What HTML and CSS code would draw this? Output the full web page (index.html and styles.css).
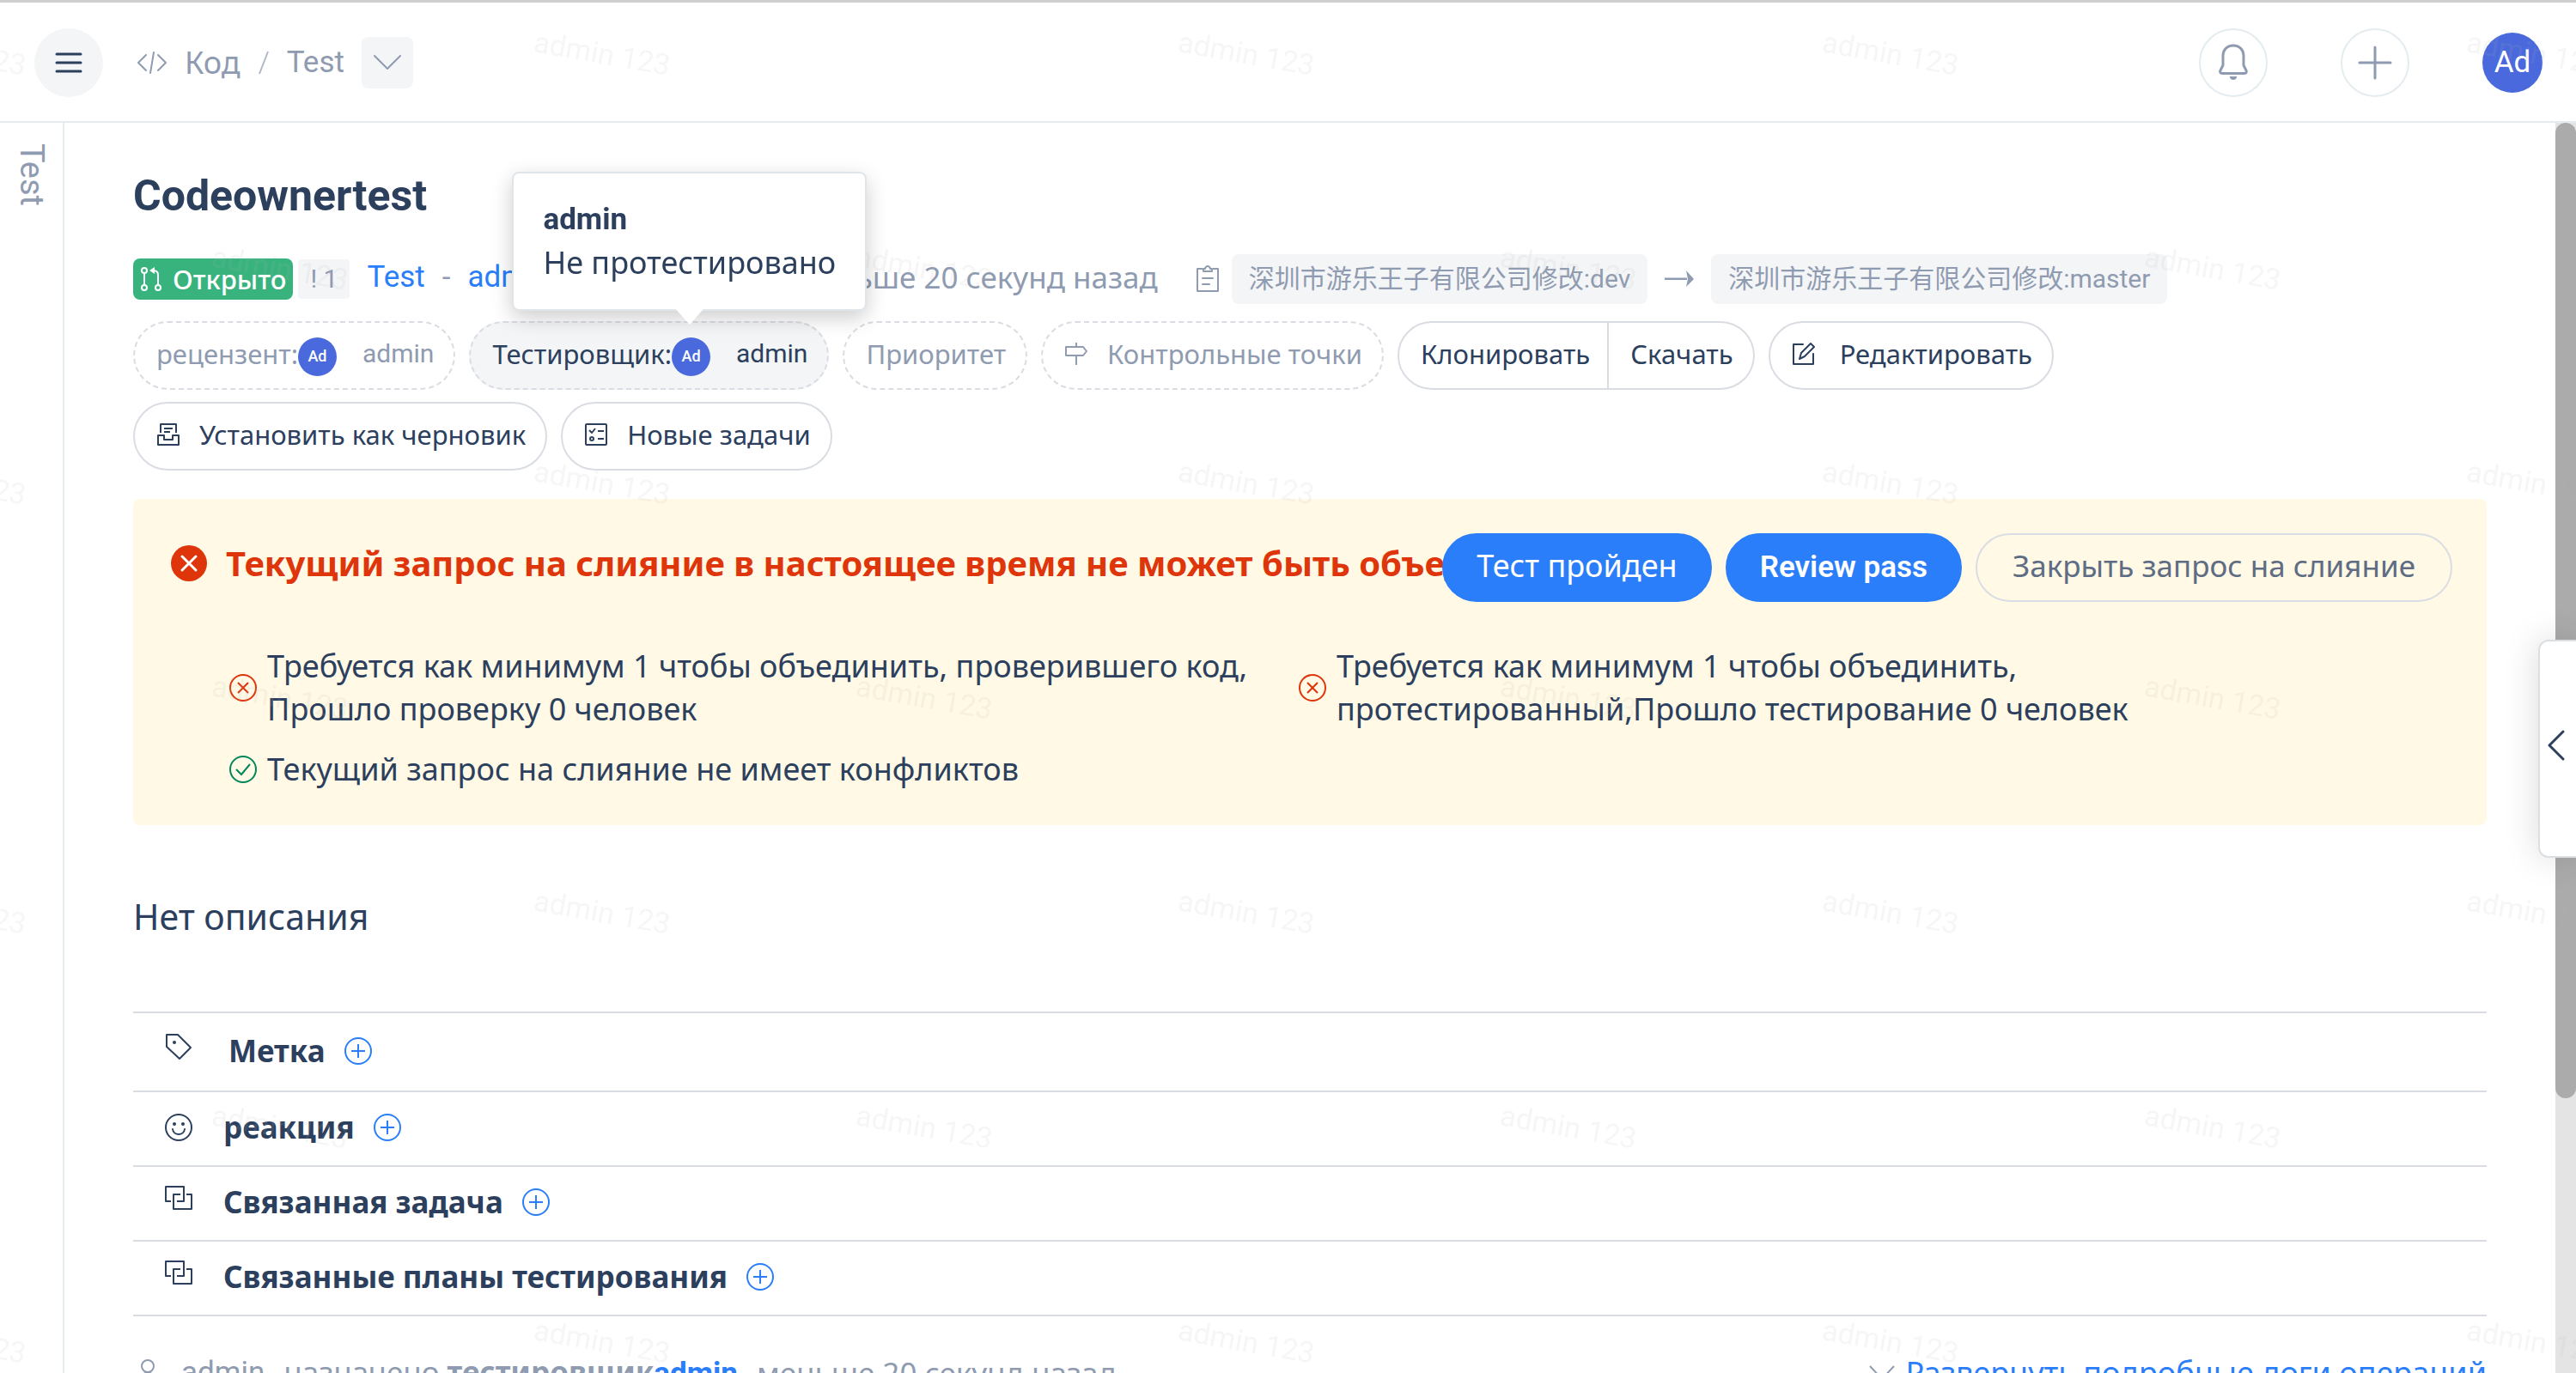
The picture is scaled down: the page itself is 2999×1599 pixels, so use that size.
FILE: index.html
```html
<!DOCTYPE html>
<html lang="ru">
<head>
<meta charset="utf-8">
<meta name="viewport" content="width=device-width, initial-scale=1">
<title>Codeownertest</title>
<link rel="stylesheet" href="styles.css">
</head>
<body>
<header class="topbar">
  <button class="round menu" type="button" aria-label="Меню">
    <svg width="32" height="32" viewBox="0 0 32 32" fill="none" stroke="currentColor" stroke-width="3" stroke-linecap="round"><path d="M2 6h28M2 16h28M2 26h28"/></svg>
  </button>
  <nav class="crumbs">
    <svg width="36" height="28" viewBox="0 0 36 28" fill="none" stroke="currentColor" stroke-width="2" stroke-linecap="round" stroke-linejoin="round"><path d="M11 5 2 14l9 9M25 5l9 9-9 9M20 2l-4 24"/></svg>
    <a href="#">Код</a>
    <svg class="slash" width="14" height="28" viewBox="0 0 14 28" fill="none" stroke="currentColor" stroke-width="2"><path d="M12 1 2 27"/></svg>
    <a href="#" class="latin">Test</a>
    <button class="drop" type="button" aria-label="Выбрать репозиторий">
      <svg width="34" height="20" viewBox="0 0 34 20" fill="none" stroke="currentColor" stroke-width="2" stroke-linecap="round" stroke-linejoin="round"><path d="M2 2l15 15L32 2"/></svg>
    </button>
  </nav>
  <div class="tools">
    <button class="round outlined" type="button" aria-label="Уведомления">
      <svg width="36" height="46" viewBox="0 0 36 46" fill="none" stroke="currentColor" stroke-width="3" stroke-linejoin="round"><path d="M18 3C10.500 3 6 8.500 6 15v11l-3 6c-1 2 0 3.500 2 3.500h26c2 0 3-1.500 2-3.500l-3-6V15C30 8.500 25.500 3 18 3z"/><path d="M14 39h8a4 4 0 0 1-8 0z" fill="currentColor" stroke="none"/></svg>
    </button>
    <button class="round outlined" type="button" aria-label="Создать">
      <svg width="40" height="40" viewBox="0 0 40 40" fill="none" stroke="currentColor" stroke-width="3" stroke-linecap="round"><path d="M20 2v36M2 20h36"/></svg>
    </button>
    <a class="avatar big" href="#">Ad</a>
  </div>
</header>

<div class="shell">
  <aside class="rail">Test</aside>
  <main class="content">
    <h1 class="title">Codeownertest</h1>

    <div class="meta">
      <span class="state">
        <svg width="26" height="30" viewBox="0 0 26 30" fill="none" stroke="currentColor" stroke-width="2"><circle cx="5" cy="5" r="3"/><circle cx="5" cy="25" r="3"/><circle cx="21" cy="25" r="3"/><path d="M5 8v14M21 22V10c0-4-2-5-6-5"/><path d="M17 1v8l-6-4z" fill="currentColor" stroke="none"/></svg>
        Открыто
      </span>
      <span class="number">! 1</span>
      <a class="link latin" href="#">Test</a>
      <span class="dash latin">-</span>
      <a class="link latin" href="#">admin</a>
      <span class="when">создал запрос меньше 20 секунд назад</span>
      <svg class="clip" width="28" height="34" viewBox="0 0 28 34" fill="none" stroke="currentColor" stroke-width="2" stroke-linejoin="round"><path d="M8 5H2v26h24V5h-6"/><path d="M9 8V5h2c1-4 5-4 6 0h2v3H9z"/><path d="M8 16h12M8 23h8" stroke-linecap="round"/></svg>
      <span class="branch">深圳市游乐王子有限公司修改:dev</span>
      <svg class="arrow" width="34" height="22" viewBox="0 0 34 22"><path d="M0 9.500h26V12H0z" fill="currentColor"/><path d="M25 1l9 10-9 9 2-9z" fill="currentColor"/></svg>
      <span class="branch">深圳市游乐王子有限公司修改:master</span>
    </div>

    <div class="actions">
      <button class="pill dashed" type="button">рецензент:<span class="avatar small">Ad</span><span class="who">admin</span></button>
      <span class="anchor">
        <button class="pill dashed active" type="button">Тестировщик:<span class="avatar small">Ad</span><span class="who">admin</span></button>
        <span class="tooltip" role="tooltip"><b class="latin">admin</b><span>Не протестировано</span></span>
      </span>
      <button class="pill dashed" type="button">Приоритет</button>
      <button class="pill dashed icon" type="button">
        <svg width="28" height="28" viewBox="0 0 28 28" fill="none" stroke="currentColor" stroke-width="2" stroke-linejoin="round"><path d="M14 1v5M14 16v11M2 6h20l4 5-4 5H2z"/></svg>
        Контрольные точки
      </button>
      <span class="group">
        <button class="pill" type="button">Клонировать</button>
        <button class="pill" type="button">Скачать</button>
      </span>
      <button class="pill icon edit" type="button">
        <svg width="28" height="28" viewBox="0 0 28 28" fill="none" stroke="currentColor" stroke-width="2" stroke-linejoin="round" stroke-linecap="round"><path d="M13 3H2v23h23V14"/><path d="M9 20l2-7L22 2l4 4-11 11z"/></svg>
        Редактировать
      </button>
      <button class="pill icon" type="button">
        <svg width="28" height="28" viewBox="0 0 28 28" fill="none" stroke="currentColor" stroke-width="2" stroke-linejoin="round"><path d="M5 12V2h18v10M9 7h10M9 11h7"/><path d="M2 15h7v5h10v-5h7v11H2z"/></svg>
        Установить как черновик
      </button>
      <button class="pill icon" type="button">
        <svg width="28" height="28" viewBox="0 0 28 28" fill="none" stroke="currentColor" stroke-width="2" stroke-linejoin="round"><rect x="2" y="2" width="24" height="24" rx="1"/><path d="M6 9l3 3 4-5M16 10h7M16 19h7"/><circle cx="9" cy="19" r="2"/></svg>
        Новые задачи
      </button>
    </div>

    <section class="alert">
      <div class="alert-head">
        <svg class="fail" width="42" height="42" viewBox="0 0 42 42"><circle cx="21" cy="21" r="21" fill="currentColor"/><path d="M13 13l16 16M29 13L13 29" stroke="#fff" stroke-width="3" stroke-linecap="round"/></svg>
        <h2 class="alert-title">Текущий запрос на слияние в настоящее время не может быть объединён</h2>
        <div class="alert-actions">
          <button class="solid" type="button">Тест пройден</button>
          <button class="solid strong" type="button">Review pass</button>
          <button class="hollow" type="button">Закрыть запрос на слияние</button>
        </div>
      </div>
      <ul class="checks">
        <li>
          <svg class="no" width="32" height="32" viewBox="0 0 32 32" fill="none" stroke="currentColor" stroke-width="2"><circle cx="16" cy="16" r="15"/><path d="M10 10l12 12M22 10L10 22"/></svg>
          <span>Требуется как минимум 1 чтобы объединить, проверившего код, Прошло проверку 0 человек</span>
        </li>
        <li>
          <svg class="no" width="32" height="32" viewBox="0 0 32 32" fill="none" stroke="currentColor" stroke-width="2"><circle cx="16" cy="16" r="15"/><path d="M10 10l12 12M22 10L10 22"/></svg>
          <span>Требуется как минимум 1 чтобы объединить,<br>протестированный,Прошло тестирование 0 человек</span>
        </li>
        <li>
          <svg class="yes" width="32" height="32" viewBox="0 0 32 32" fill="none" stroke="currentColor" stroke-width="2"><circle cx="16" cy="16" r="15"/><path d="M8 16l6 6 10-12"/></svg>
          <span>Текущий запрос на слияние не имеет конфликтов</span>
        </li>
      </ul>
    </section>

    <p class="description">Нет описания</p>

    <div class="fields">
      <div class="field tag">
        <svg class="lead" width="32" height="32" viewBox="0 0 32 32" fill="none" stroke="currentColor" stroke-width="2" stroke-linejoin="round"><path d="M2 2h13l15 15-13 13L2 16z"/><circle cx="11" cy="11" r="2" fill="currentColor" stroke="none"/></svg>
        <b>Метка</b>
        <button class="add" type="button" aria-label="Добавить метку"><svg width="32" height="32" viewBox="0 0 32 32" fill="none" stroke="currentColor" stroke-width="2"><circle cx="16" cy="16" r="15"/><path d="M16 8v16M8 16h16"/></svg></button>
      </div>
      <div class="field face">
        <svg class="lead" width="32" height="32" viewBox="0 0 32 32" fill="none" stroke="currentColor" stroke-width="2" stroke-linecap="round"><circle cx="16" cy="16" r="15"/><path d="M9 18c1 8 13 8 14 0"/><circle cx="11" cy="12" r="2" fill="currentColor" stroke="none"/><circle cx="21" cy="12" r="2" fill="currentColor" stroke="none"/></svg>
        <b>реакция</b>
        <button class="add" type="button" aria-label="Добавить реакцию"><svg width="32" height="32" viewBox="0 0 32 32" fill="none" stroke="currentColor" stroke-width="2"><circle cx="16" cy="16" r="15"/><path d="M16 8v16M8 16h16"/></svg></button>
      </div>
      <div class="field">
        <svg class="lead" width="32" height="28" viewBox="0 0 32 28" fill="none" stroke="currentColor" stroke-width="2" stroke-linejoin="round"><path d="M7 18H1V1h21v17h-8"/><path d="M18 10h-8v17h21V10h-6"/></svg>
        <b>Связанная задача</b>
        <button class="add" type="button" aria-label="Добавить задачу"><svg width="32" height="32" viewBox="0 0 32 32" fill="none" stroke="currentColor" stroke-width="2"><circle cx="16" cy="16" r="15"/><path d="M16 8v16M8 16h16"/></svg></button>
      </div>
      <div class="field">
        <svg class="lead" width="32" height="28" viewBox="0 0 32 28" fill="none" stroke="currentColor" stroke-width="2" stroke-linejoin="round"><path d="M7 18H1V1h21v17h-8"/><path d="M18 10h-8v17h21V10h-6"/></svg>
        <b>Связанные планы тестирования</b>
        <button class="add" type="button" aria-label="Добавить план"><svg width="32" height="32" viewBox="0 0 32 32" fill="none" stroke="currentColor" stroke-width="2"><circle cx="16" cy="16" r="15"/><path d="M16 8v16M8 16h16"/></svg></button>
      </div>
    </div>

    <div class="log">
      <svg width="34" height="34" viewBox="0 0 34 34" fill="none" stroke="currentColor" stroke-width="2"><circle cx="17" cy="9" r="7"/><path d="M6 33c0-22 22-22 22 0z"/></svg>
      <span class="latin">admin</span>
      <span>назначено <b>тестировщик</b><a class="link latin" href="#"><b>admin</b></a></span>
      <span>меньше 20 секунд назад</span>
      <a class="link expand" href="#"><svg width="32" height="20" viewBox="0 0 32 20" fill="none" stroke="currentColor" stroke-width="2"><path d="M2 2l14 15L30 2"/></svg>Развернуть подробные логи операций</a>
    </div>
  </main>
  <div class="scroll"><div class="thumb"></div></div>
  <button class="drawer" type="button" aria-label="Открыть панель">
    <svg width="22" height="36" viewBox="0 0 22 36" fill="none" stroke="currentColor" stroke-width="3" stroke-linecap="round" stroke-linejoin="round"><path d="M19 2 3 18l16 16"/></svg>
  </button>
</div>

<svg class="watermark" aria-hidden="true">
  <defs>
    <pattern id="mark" width="750" height="500" patternUnits="userSpaceOnUse">
      <text transform="translate(620 60) rotate(10)">admin 123</text>
      <text transform="translate(-130 60) rotate(10)">admin 123</text>
      <text transform="translate(245 310) rotate(10)">admin 123</text>
    </pattern>
  </defs>
  <rect width="100%" height="100%" fill="url(#mark)"/>
</svg>
</body>
</html>
```
FILE: styles.css
```css
* { box-sizing: border-box; }

body {
  margin: 0;
  height: 100vh;
  overflow: hidden;
  display: flex;
  flex-direction: column;
  border-top: 3px solid #cdcfce;
  background: #fff;
  color: #2c405e;
  font: 36px/50px "Noto Sans", sans-serif;
}

button { font: inherit; color: inherit; margin: 0; padding: 0; border: 0; background: none; cursor: pointer; }
a { color: inherit; text-decoration: none; }
svg { flex: none; display: block; }
.latin { font-family: Roboto, sans-serif; font-size: 35px; }
.link { color: #2b7ef9; }

/* Top bar */
.topbar {
  flex: none;
  display: flex;
  align-items: center;
  height: 140px;
  padding: 2px 39px 0 40px;
  border-bottom: 2px solid #e4ecf0;
}
.round { display: flex; align-items: center; justify-content: center; width: 80px; height: 80px; border-radius: 50%; }
.menu { background: #f4f5f7; }
.outlined { border: 2px solid #e4ecf0; color: #8f9bb0; }
.crumbs { display: flex; align-items: center; gap: 20px; margin-left: 39px; color: #8f9bb0; }
.slash { opacity: .7; }
.drop { display: flex; align-items: center; justify-content: center; width: 60px; height: 60px; border-radius: 8px; background: #f4f5f7; }
.tools { display: flex; align-items: center; gap: 85px; margin-left: auto; }
.avatar { display: flex; align-items: center; justify-content: center; flex: none; border-radius: 50%; background: #4969dc; color: #fff; font-family: Roboto, sans-serif; }
.big { width: 70px; height: 70px; font-size: 35px; }
.small { width: 45px; height: 45px; margin-top: 6px; font-size: 18px; font-weight: 500; }

/* Shell */
.shell { position: relative; flex: 1; min-height: 0; display: flex; }
.rail {
  flex: none;
  width: 75px;
  padding-top: 24px;
  border-right: 2px solid #e4ecf0;
  color: #8f9bb0;
  font: 38px/73px Roboto, sans-serif;
  writing-mode: vertical-rl;
}
.content { flex: 1; min-width: 0; padding: 55px 80px 0; overflow: hidden; }
.scroll { flex: none; width: 24px; background: #e4e4e4; }
.thumb { height: 78%; border-radius: 12px; background: #ababab; }
.drawer {
  position: absolute;
  right: 0;
  top: 602px;
  width: 44px;
  height: 254px;
  padding: 0 0 8px 8px;
  border: 2px solid #dcdfe2;
  border-right: 0;
  border-radius: 12px 0 0 12px;
  background: #fff;
  box-shadow: 0 0 40px rgba(0, 0, 0, .15);
}

.title { margin: 0 0 38px; font: 700 50px/60px Roboto, sans-serif; }

.meta { display: flex; align-items: center; color: #8f9bb0; font-size: 35px; white-space: nowrap; }
.meta .latin, .when { padding-bottom: 4px; }
.state { display: flex; align-items: center; gap: 12px; height: 48px; padding: 0 8px; border-radius: 8px; background: #38b37e; color: #fff; font-size: 31px; font-weight: 500; }
.number { height: 46px; margin: 0 20px 0 6px; padding: 0 14px; border-radius: 4px; background: #f4f5f7; font: 30px/46px Roboto, sans-serif; }
.dash { margin: 0 20px; }
.when { margin-left: 36px; }
.clip { margin: 0 14px 0 44px; }
.branch { height: 58px; padding: 0 20px; border-radius: 8px; background: #f4f5f7; font: 30px/58px Roboto, "Noto Sans CJK SC", sans-serif; }
.arrow { margin: 0 20px; }

.actions { display: flex; flex-wrap: wrap; gap: 14px 16px; margin: 20px 0 33px; padding-right: 40px; }
.pill {
  display: flex;
  align-items: center;
  height: 80px;
  padding: 0 23px 4px 25px;
  border: 2px solid #d9dde3;
  border-radius: 40px;
  font-size: 31px;
  white-space: nowrap;
}
.dashed { border-style: dashed; color: #8f9bb0; }
.active { background: #f4f5f7; color: #2c405e; }
.who { margin-left: 30px; font: 30px/50px Roboto, sans-serif; }
.icon { gap: 22px; }
.edit { gap: 28px; }
.group { display: flex; }
.group .pill:first-child { border-radius: 40px 0 0 40px; padding-right: 20px; }
.group .pill:last-child { border-radius: 0 40px 40px 0; border-left: 0; }

.anchor { position: relative; display: flex; }
.tooltip {
  position: absolute;
  z-index: 5;
  bottom: 92px;
  left: 50px;
  display: flex;
  flex-direction: column;
  padding: 29px 34px;
  border: 2px solid #e0e5ea;
  border-radius: 8px;
  background: #fff;
  box-shadow: 0 8px 24px rgba(0, 0, 0, .2);
  font-size: 36px;
  white-space: nowrap;
}
.tooltip::after {
  content: "";
  position: absolute;
  left: 50%;
  bottom: -18px;
  width: 34px;
  height: 19px;
  margin-left: -17px;
  background: #fff;
  clip-path: polygon(0 0, 100% 0, 50% 100%);
}

/* Merge status */
.alert { padding: 40px 40px 40px 44px; border-radius: 8px; background: #fff9e5; }
.alert-head { display: flex; align-items: center; }
.fail { color: #de350b; margin-bottom: 10px; }
.alert-title { flex: 1; min-width: 0; margin: 0 -20px 10px 22px; overflow: hidden; color: #de350b; font: 700 40px/60px "Noto Sans", sans-serif; white-space: nowrap; }
.alert-actions { position: relative; display: flex; gap: 16px; }
.solid, .hollow { height: 80px; padding: 0 38px 4px; border: 2px solid #2b7ef9; border-radius: 40px; }
.solid { background: #2b7ef9; color: #fff; }
.strong { padding-bottom: 0; font: 600 35px/50px Roboto, sans-serif; }
.hollow { padding: 0 41px 4px; border-color: #dadde3; color: #5e6c84; font-size: 35px; }
.checks { display: grid; grid-template-columns: 1fr 1fr; gap: 20px 40px; margin: 50px 0 0; padding: 0 138px 0 68px; list-style: none; }
.checks li { display: flex; align-items: center; gap: 12px; }
.no { color: #de350b; }
.yes { color: #00875a; }

.description { margin: 76px 0 81px; font-size: 41px; line-height: 60px; }

.fields { border-top: 2px solid #d9dde3; font-size: 35px; }
.field { display: flex; align-items: center; height: 87px; padding: 0 0 3px 37px; border-bottom: 2px solid #d9dde3; }
.field b { margin: 0 22px 0 36px; }
.lead { margin-bottom: 10px; }
.face .lead { margin-bottom: 0; }
.tag { height: 92px; }
.tag b { margin-left: 42px; }
.add { color: #2b7ef9; }

.log { display: flex; align-items: center; gap: 22px; padding-top: 40px; color: #8f9bb0; font-size: 35px; white-space: nowrap; }
.expand { display: flex; align-items: center; gap: 12px; margin-left: auto; font-size: 36px; }
.expand svg { color: #8f9bb0; }

.watermark { position: fixed; inset: 0; width: 100%; height: 100%; pointer-events: none; }
.watermark text { font: 34px Roboto, sans-serif; fill: rgba(184, 184, 184, .12); }
```
